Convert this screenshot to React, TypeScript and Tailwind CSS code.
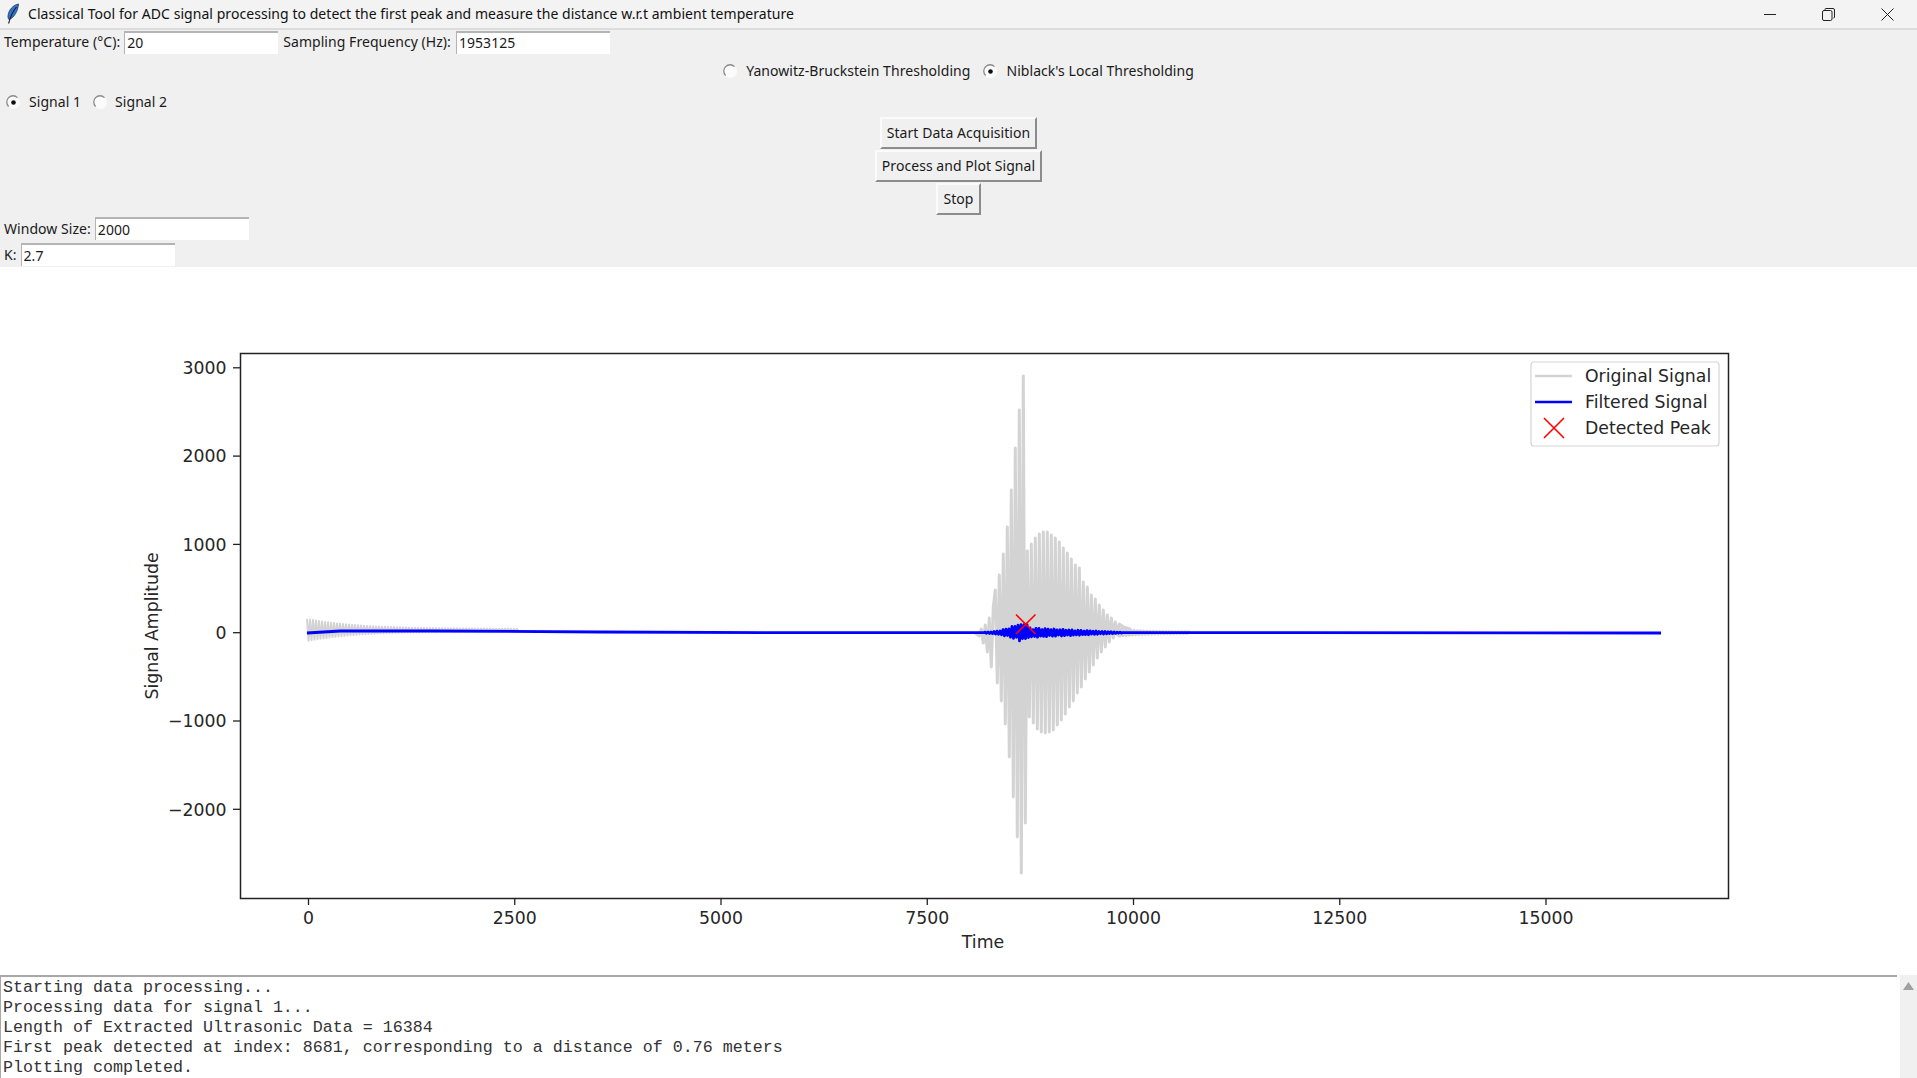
import React from "react";

const ui = "font-['Noto_Sans','Open_Sans',sans-serif] text-[14px] leading-[20px] text-[#1a1a1a] tracking-[0.05px]";

function Radio({ checked }: { checked?: boolean }) {
  return (
    <svg width="15" height="15" viewBox="0 0 15 15" className="shrink-0">
      <circle cx="7.5" cy="7.5" r="6.5" fill="#fbfbfb" />
      <path d="M2.6 11.5A6 6 0 0 1 11.5 2.6" fill="none" stroke="#8a8a8a" strokeWidth="1.3" />
      {checked && <circle cx="7.5" cy="7.5" r="2.3" fill="#111" />}
    </svg>
  );
}

function Entry({ value, width = "w-[154px]" }: { value: string; width?: string }) {
  return (
    <input
      readOnly
      value={value}
      className={`${width} h-[23px] bg-white border-t-2 border-l border-t-[#b4b4b4] border-l-[#b4b4b4] pl-[2px] pb-[1px] outline-none ${ui}`}
    />
  );
}

function TkButton({ children }: { children: React.ReactNode }) {
  return (
    <button className={`h-[32px] px-[5px] bg-[#f0f0f0] border-2 border-t-[#fbfbfb] border-l-[#fbfbfb] border-r-[#8c8c8c] border-b-[#8c8c8c] ${ui}`}>
      {children}
    </button>
  );
}

const upper: number[][] = [[94,629],[106,625],[118,618],[130,607],[136,590],[148,575],[160,554],[172,527],[184,490],[196,448],[208,410],[220,376],[232,551],[244,544],[256,538],[268,534],[280,532],[292,532],[304,535],[316,538],[328,542],[340,548],[352,553],[364,559],[376,565],[388,568],[400,582],[412,587],[424,595],[436,599],[448,605],[460,610],[472,615],[484,618],[496,622],[508,624],[520,627],[540,629]];
const lower: number[][] = [[88,636],[100,643],[112,652],[124,667],[142,683],[154,701],[166,724],[178,757],[190,797],[202,837],[214,873],[226,823],[238,717],[250,723],[262,729],[274,732],[286,733],[298,732],[310,730],[322,725],[334,720],[346,714],[358,707],[370,701],[382,693],[394,687],[406,679],[418,672],[430,665],[442,658],[454,652],[466,647],[478,642],[490,638],[502,635]];

function grayStart() {
  const pts: string[] = [];
  let up = true;
  for (let x = 307; x < 520; x += 1.5) {
    const d = x - 307;
    const a = 10 * Math.exp(-d / 50) + 0.6;
    pts.push(`${x.toFixed(1)},${(630.5 + (up ? -a - 1 : a)).toFixed(1)}`);
    up = !up;
  }
  return "M" + pts.join("L");
}

function grayPath() {
  const pts: string[] = ["975,632.7"];
  const main = [...upper, ...lower].sort((a, b) => a[0] - b[0]);
  for (const [z, y] of main) pts.push(`${(950 + z / 3).toFixed(1)},${y}`);
  let up = true;
  for (let x = 1118; x < 1190; x += 1.6) {
    const a = 0.6 + 3 * Math.exp(-(x - 1118) / 25);
    pts.push(`${x.toFixed(1)},${(632.7 + (up ? -a : a)).toFixed(1)}`);
    up = !up;
  }
  return "M" + pts.join("L");
}

function bluePath() {
  const pts: string[] = ["307,633", "340,631", "430,631", "600,632", "800,632.7", "985,632.7"];
  let up = true;
  for (let x = 985; x < 1122; x += 1.5) {
    let t: number, b: number;
    const wave = 0.6 + 0.4 * Math.abs(Math.sin((x * Math.PI) / 8.4));
    if (x < 1021) {
      const k = Math.pow((x - 985) / 36, 2);
      t = 0.6 + 10 * k * wave;
      b = 0.6 + 8.5 * k * wave;
    } else if (x < 1028) {
      t = 8;
      b = 6;
    } else {
      const k = 1 - (x - 1028) / 94;
      t = 0.4 + 4.6 * k * wave;
      b = 0.4 + 4.6 * k * wave;
    }
    pts.push(`${x.toFixed(1)},${(632.7 + (up ? -t : b)).toFixed(1)}`);
    up = !up;
  }
  pts.push("1122,632.7", "1300,632.7", "1661,633");
  return "M" + pts.join("L");
}

const xTicks = [0, 2500, 5000, 7500, 10000, 12500, 15000];
const yTicks = [3000, 2000, 1000, 0, -1000, -2000];

function Chart() {
  const dv = "'DejaVu Sans',sans-serif";
  return (
    <svg viewBox="0 267 1917 708" className="block shrink-0 w-[1917px] h-[708px] bg-white">
      <path d={grayStart()} fill="none" stroke="#d3d3d3" strokeWidth="2" strokeLinejoin="round" />
      <path d={grayPath()} fill="none" stroke="#d3d3d3" strokeWidth="3" strokeLinejoin="round" />
      <path d={bluePath()} fill="none" stroke="#0000ff" strokeWidth="2.8" strokeLinejoin="round" />
      <path d="M1016 614.5L1035.5 634M1035.5 614.5L1016 634" stroke="#ff0000" strokeWidth="1.6" fill="none" />
      <rect x="240.5" y="353.5" width="1488" height="545" fill="none" stroke="#222" strokeWidth="1.5" />
      {xTicks.map((t) => {
        const x = 308.5 + t * 0.0825;
        return (
          <g key={t}>
            <line x1={x} x2={x} y1={898} y2={905} stroke="#222" strokeWidth="1.3" />
            <text x={x} y={923.5} textAnchor="middle" fontSize="17.3" fontFamily={dv} fill="#262626">{t}</text>
          </g>
        );
      })}
      {yTicks.map((t) => {
        const y = 632.7 - t * 0.0883;
        return (
          <g key={t}>
            <line x1={233} x2={240} y1={y} y2={y} stroke="#222" strokeWidth="1.3" />
            <text x={226.5} y={y + 6.3} textAnchor="end" fontSize="17.3" fontFamily={dv} fill="#262626">{t < 0 ? `\u2212${-t}` : t}</text>
          </g>
        );
      })}
      <text x={983} y={947.5} textAnchor="middle" fontSize="17.3" fontFamily={dv} fill="#262626">Time</text>
      <text transform="translate(157.5 626) rotate(-90)" textAnchor="middle" fontSize="17.3" fontFamily={dv} fill="#262626">Signal Amplitude</text>
      <rect x="1531" y="362" width="188" height="84" rx="3" fill="#ffffff" stroke="#d5d5d5" strokeWidth="1.2" />
      <line x1="1535" x2="1572" y1="376" y2="376" stroke="#d3d3d3" strokeWidth="2.4" />
      <line x1="1535" x2="1572" y1="402" y2="402" stroke="#0000ff" strokeWidth="2.4" />
      <path d="M1544 418L1564 438M1564 418L1544 438" stroke="#ff0000" strokeWidth="1.6" fill="none" />
      <text x={1585} y={381.5} fontSize="17.3" fontFamily={dv} fill="#262626">Original Signal</text>
      <text x={1585} y={407.5} fontSize="17.3" fontFamily={dv} fill="#262626">Filtered Signal</text>
      <text x={1585} y={433.5} fontSize="17.3" fontFamily={dv} fill="#262626">Detected Peak</text>
    </svg>
  );
}

export default function App() {
  return (
    <div className="w-[1917px] h-[1078px] overflow-hidden flex flex-col bg-white">
      <div className="h-[30px] shrink-0 flex items-center bg-[#f3f3f3] border-b-2 border-[#dcdcdc]">
        <svg width="14" height="22" viewBox="0 0 14 22" className="ml-[6px] shrink-0">
          <path d="M12.5 1C7 2 2.5 7 2 13c-.1 1.5.4 3 1 3.6C8 15 12 8 12.5 1z" fill="#2f74cf" stroke="#1d3557" strokeWidth="0.8" />
          <path d="M10.5 4C7 8 4.5 13 2.6 20.5" stroke="#1a1a1a" strokeWidth="1.1" fill="none" />
        </svg>
        <span className={`ml-[8px] ${ui} text-[#111]`}>Classical Tool for ADC signal processing to detect the first peak and measure the distance w.r.t ambient temperature</span>
        <div className="ml-auto flex items-center">
          <svg width="12" height="12" viewBox="0 0 12 12" className="mr-[46px]"><path d="M0 6.5H12" stroke="#222" strokeWidth="1" /></svg>
          <svg width="13" height="13" viewBox="0 0 13 13" className="mr-[46px]"><rect x="0.5" y="2.5" width="9.5" height="10" rx="1.5" fill="none" stroke="#222" /><path d="M3 2V1.5A1 1 0 0 1 4 .5H11A1.5 1.5 0 0 1 12.5 2V9A1 1 0 0 1 11.5 10" fill="none" stroke="#222" /></svg>
          <svg width="13" height="13" viewBox="0 0 13 13" className="mr-[23px]"><path d="M.5.5L12.5 12.5M12.5.5L.5 12.5" stroke="#222" strokeWidth="1" /></svg>
        </div>
      </div>

      <div className="h-[237px] shrink-0 bg-[#f0f0f0] flex flex-col">
        <div className="h-[24px] flex items-center pl-[4px]">
          <span className={ui}>Temperature (°C):</span>
          <span className="w-[4px]" />
          <Entry value="20" />
          <span className={`ml-[5px] ${ui}`}>Sampling Frequency (Hz):</span>
          <span className="w-[5px]" />
          <Entry value="1953125" />
        </div>
        <div className="h-[22px] mt-[6px] flex items-center justify-center">
          <Radio />
          <span className={`ml-[8px] ${ui}`}>Yanowitz-Bruckstein Thresholding</span>
          <span className="w-[13px]" />
          <Radio checked />
          <span className={`ml-[8px] ${ui}`}>Niblack's Local Thresholding</span>
        </div>
        <div className="h-[22px] mt-[9px] flex items-center pl-[6px]">
          <Radio checked />
          <span className={`ml-[8px] ${ui}`}>Signal 1</span>
          <span className="w-[12px]" />
          <Radio />
          <span className={`ml-[7px] ${ui}`}>Signal 2</span>
        </div>
        <div className="mt-[4px] flex flex-col items-center gap-[1px]">
          <TkButton>Start Data Acquisition</TkButton>
          <TkButton>Process and Plot Signal</TkButton>
          <TkButton>Stop</TkButton>
        </div>
        <div className="h-[23px] mt-[2px] flex items-center pl-[4px]">
          <span className={ui}>Window Size:</span>
          <span className="w-[4px]" />
          <Entry value="2000" />
        </div>
        <div className="h-[23px] mt-[3px] flex items-center pl-[4px]">
          <span className={ui}>K:</span>
          <span className="w-[4px]" />
          <Entry value="2.7" />
        </div>
      </div>

      <Chart />

      <div className="flex-1 min-h-0 overflow-hidden flex bg-white">
        <div className="w-[1897px] border-t-2 border-l border-[#a8a8a8] pl-[2px] pt-[1px] font-['Liberation_Mono',monospace] text-[16.67px] leading-[20px] text-[#333] whitespace-pre">
          <div>Starting data processing...</div>
          <div>Processing data for signal 1...</div>
          <div>Length of Extracted Ultrasonic Data = 16384</div>
          <div>First peak detected at index: 8681, corresponding to a distance of 0.76 meters</div>
          <div>Plotting completed.</div>
        </div>
        <div className="ml-[3px] w-[17px] bg-[#f0f0f0] flex justify-center pt-[7px]">
          <svg width="11" height="8" viewBox="0 0 11 8"><path d="M5.5 0L11 8H0z" fill="#a0a0a0" /></svg>
        </div>
      </div>
    </div>
  );
}
